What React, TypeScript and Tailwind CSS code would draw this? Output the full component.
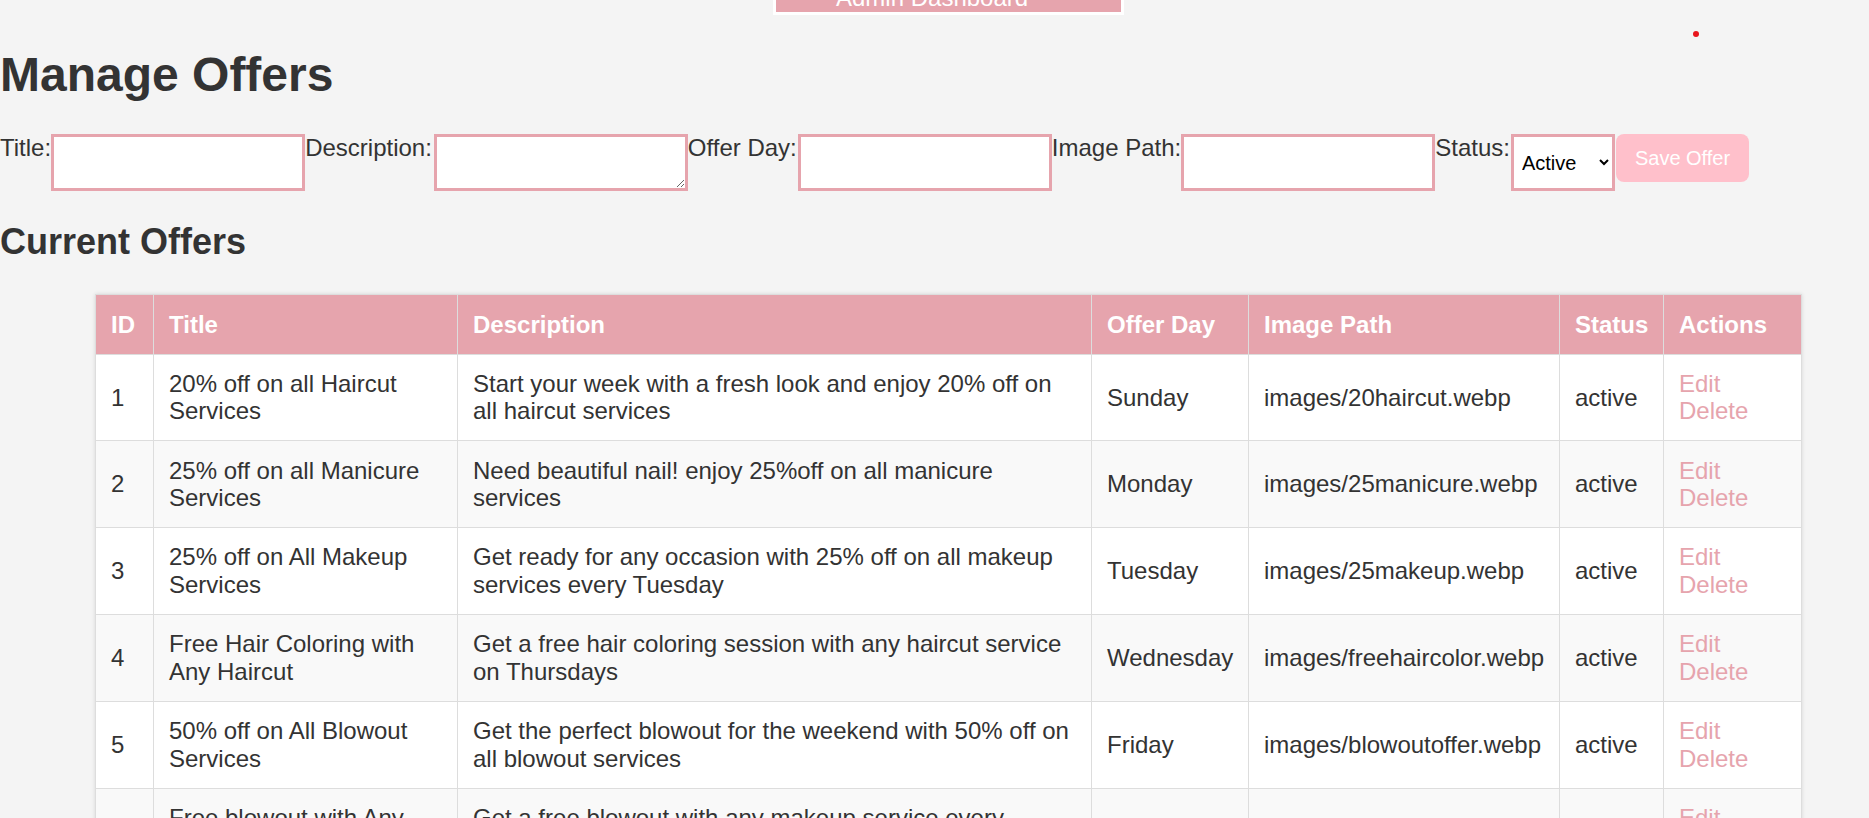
import React from 'react';

type Offer = {
    id: number;
    title: string;
    description: string;
    day: string;
    image: string;
    status: string;
};

const offers: Offer[] = [
    { id: 1, title: '20% off on all Haircut Services', description: 'Start your week with a fresh look and enjoy 20% off on all haircut services', day: 'Sunday', image: 'images/20haircut.webp', status: 'active' },
    { id: 2, title: '25% off on all Manicure Services', description: 'Need beautiful nail! enjoy 25%off on all manicure services', day: 'Monday', image: 'images/25manicure.webp', status: 'active' },
    { id: 3, title: '25% off on All Makeup Services', description: 'Get ready for any occasion with 25% off on all makeup services every Tuesday', day: 'Tuesday', image: 'images/25makeup.webp', status: 'active' },
    { id: 4, title: 'Free Hair Coloring with Any Haircut', description: 'Get a free hair coloring session with any haircut service on Thursdays', day: 'Wednesday', image: 'images/freehaircolor.webp', status: 'active' },
    { id: 5, title: '50% off on All Blowout Services', description: 'Get the perfect blowout for the weekend with 50% off on all blowout services', day: 'Friday', image: 'images/blowoutoffer.webp', status: 'active' },
    { id: 6, title: 'Free blowout with Any Makeup Service', description: 'Get a free blowout with any makeup service every Saturday', day: 'Saturday', image: 'images/freeblowout.webp', status: 'active' },
];

const inputClass = 'w-[254px] h-[57px] border-3 border-[#e6a4ad] bg-white px-1 text-[20px] outline-none';

const App = () => {
    return (
        <div className="relative min-h-screen bg-[#f4f4f4] font-['Liberation_Sans',Arial,sans-serif] text-[#333] text-[24px] leading-[27.6px]">
            {/* top nav, scrolled partly out of view */}
            <div className="ml-[773px] w-[351px] h-[15px] overflow-hidden border-3 border-t-0 border-white bg-[#e6a4ad]">
                <div className="-mt-[16px] pl-[60px] text-white whitespace-nowrap">Admin Dashboard</div>
            </div>
            <span className="absolute left-[1693px] top-[31px] w-[6px] h-[6px] rounded-full bg-[#e8161c]"></span>

            <h1 className="mt-[32px] mb-[32px] text-[48px] leading-[55px] font-bold">Manage Offers</h1>

            <form className="flex items-start" onSubmit={(e) => e.preventDefault()}>
                <label>Title:</label>
                <input type="text" className={inputClass} />
                <label>Description:</label>
                <textarea className={`${inputClass} ml-[2px] block`}></textarea>
                <label>Offer Day:</label>
                <input type="text" className={`${inputClass} ml-[1px]`} />
                <label>Image Path:</label>
                <input type="text" className={inputClass} />
                <label>Status:</label>
                <select defaultValue="active" className="ml-[1px] w-[104px] h-[57px] border-3 border-[#e6a4ad] bg-white pl-[4px] text-[20px] text-black">
                    <option value="active">Active</option>
                    <option value="inactive">Inactive</option>
                </select>
                <button type="submit" className="ml-[1px] h-[48px] px-[19px] rounded-[8px] bg-[#ffc0cb] text-white text-[20px] leading-[23px]">
                    Save Offer
                </button>
            </form>

            <h2 className="mt-[30px] mb-[32px] text-[36px] leading-[41.4px] font-bold">Current Offers</h2>

            <table className="ml-[95px] w-[1706px] table-fixed border-collapse bg-white shadow-[0_0_4px_rgba(0,0,0,0.12)]">
                <colgroup>
                    <col className="w-[58px]" />
                    <col className="w-[304px]" />
                    <col className="w-[634px]" />
                    <col className="w-[157px]" />
                    <col className="w-[311px]" />
                    <col className="w-[104px]" />
                    <col className="w-[138px]" />
                </colgroup>
                <thead>
                    <tr className="bg-[#e6a4ad] text-white">
                        {['ID', 'Title', 'Description', 'Offer Day', 'Image Path', 'Status', 'Actions'].map((h) => (
                            <th key={h} className="border border-[#ddd] px-[15px] py-[15.3px] text-left font-bold">{h}</th>
                        ))}
                    </tr>
                </thead>
                <tbody>
                    {offers.map((o, i) => (
                        <tr key={o.id} className={i % 2 === 1 ? 'bg-[#f9f9f9]' : 'bg-white'}>
                            <td className="border border-[#ddd] px-[15px] py-[15.3px] align-middle">{o.id}</td>
                            <td className="border border-[#ddd] px-[15px] py-[15.3px] align-middle">{o.title}</td>
                            <td className="border border-[#ddd] px-[15px] py-[15.3px] align-middle">{o.description}</td>
                            <td className="border border-[#ddd] px-[15px] py-[15.3px] align-middle">{o.day}</td>
                            <td className="border border-[#ddd] px-[15px] py-[15.3px] align-middle">{o.image}</td>
                            <td className="border border-[#ddd] px-[15px] py-[15.3px] align-middle">{o.status}</td>
                            <td className="border border-[#ddd] px-[15px] py-[15.3px] align-middle">
                                <div className="flex flex-col items-start text-[#e6a4ad]">
                                    <a href="#">Edit</a>
                                    <a href="#">Delete</a>
                                </div>
                            </td>
                        </tr>
                    ))}
                </tbody>
            </table>
        </div>
    );
};

export default App;
